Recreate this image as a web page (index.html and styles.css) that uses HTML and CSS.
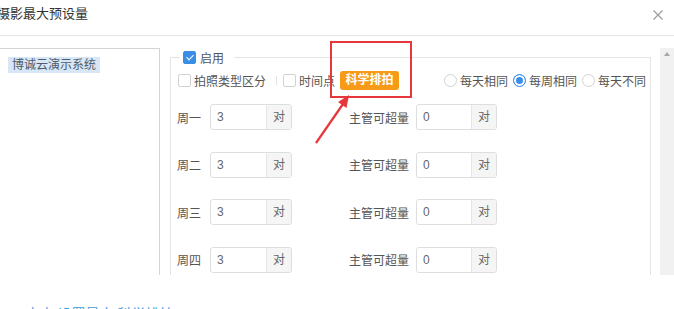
FILE: index.html
```html
<!DOCTYPE html>
<html lang="zh-CN">
<head>
  <meta charset="UTF-8">
  <title>摄影最大预设量</title>
  <link rel="stylesheet" href="styles.css">
</head>
<body>
  <div class="dialog">
    <!-- 标题栏 -->
    <div class="dialog-head">
      <span class="dialog-title">摄影最大预设量</span>
      <svg class="close" width="10" height="10" viewBox="0 0 10 10">
        <path d="M0.5 0.5 L9.5 9.5 M9.5 0.5 L0.5 9.5" stroke="#9a9a9a" stroke-width="1.1" fill="none"/>
      </svg>
    </div>

    <div class="dialog-body">
      <!-- 左侧机构 -->
      <div class="org-tree">
        <span class="org-item">博诚云演示系统</span>
      </div>

      <!-- 右侧设置 -->
      <fieldset class="setting">
        <legend><span class="legend-inner"><span class="check checked"></span>启用</span></legend>

        <div class="options">
          <label class="opt first"><span class="check"></span>拍照类型区分</label>
          <span class="split"></span>
          <label class="opt second"><span class="check"></span>时间点</label>
          <span class="btn-orange">科学排拍</span>
          <label class="radio first"><span class="dot"></span>每天相同</label>
          <label class="radio"><span class="dot checked"></span>每周相同</label>
          <label class="radio"><span class="dot"></span>每天不同</label>
        </div>

        <div class="day-rows">
          <div class="day-row">
            <span class="day-label">周一</span>
            <div class="num-input"><span class="num-val">3</span><span class="unit">对</span></div>
            <span class="over-label">主管可超量</span>
            <div class="num-input small"><span class="num-val">0</span><span class="unit">对</span></div>
          </div>
          <div class="day-row">
            <span class="day-label">周二</span>
            <div class="num-input"><span class="num-val">3</span><span class="unit">对</span></div>
            <span class="over-label">主管可超量</span>
            <div class="num-input small"><span class="num-val">0</span><span class="unit">对</span></div>
          </div>
          <div class="day-row">
            <span class="day-label">周三</span>
            <div class="num-input"><span class="num-val">3</span><span class="unit">对</span></div>
            <span class="over-label">主管可超量</span>
            <div class="num-input small"><span class="num-val">0</span><span class="unit">对</span></div>
          </div>
          <div class="day-row">
            <span class="day-label">周四</span>
            <div class="num-input"><span class="num-val">3</span><span class="unit">对</span></div>
            <span class="over-label">主管可超量</span>
            <div class="num-input small"><span class="num-val">0</span><span class="unit">对</span></div>
          </div>
          <div class="day-row">
            <span class="day-label">周五</span>
            <div class="num-input"><span class="num-val">3</span><span class="unit">对</span></div>
            <span class="over-label">主管可超量</span>
            <div class="num-input small"><span class="num-val">0</span><span class="unit">对</span></div>
          </div>
        </div>
      </fieldset>

      <!-- 滚动条 -->
      <div class="scrollbar"><span class="arrow-up"></span></div>
    </div>

    <p class="tip">4、 点击 设置最大 科学排拍</p>
  </div>

  <!-- 标注：红框和箭头 -->
  <div class="mark-box"></div>
  <svg class="mark-arrow" width="60" height="60" viewBox="0 0 60 60">
    <line x1="16" y1="53" x2="43" y2="14" stroke="#e8373a" stroke-width="2.2"/>
    <polygon points="49,5 46.5,18 38,12" fill="#e8373a"/>
  </svg>
</body>
</html>
```

FILE: styles.css
```css
/* 基本设置 */
body {
  margin: 0;
  background: #fff;
  font-family: "Liberation Sans", "Noto Sans CJK SC", sans-serif;
  color: #555;
  overflow: hidden;
}
.dialog {
  width: 674px;
}
/* 标题栏 */
.dialog-head {
  height: 35px;
  border-bottom: 1px solid #e6e6e6;
  display: flex;
  justify-content: space-between;
  align-items: flex-start;
}
.dialog-title {
  margin-left: -3px;
  padding-top: 6px;
  font-size: 13px;
  line-height: 16px;
  color: #333;
  white-space: nowrap;
}
.close {
  margin: 10px 11px 0 0;
}
/* 主体区域 */
.dialog-body {
  display: flex;
  margin-top: 12px;
  height: 227px;
  overflow: hidden;
}
.org-tree {
  flex: none;
  box-sizing: border-box;
  width: 170px;
  height: 260px;
  margin-left: -10px;
  border: 1px solid #d4d4d4;
}
.org-item {
  display: inline-block;
  margin: 8px 0 0 17px;
  padding: 0 4px;
  font-size: 12px;
  line-height: 16px;
  background: #d8e7f6;
  color: #4d5c6b;
}
/* 设置框 */
.setting {
  flex: none;
  box-sizing: border-box;
  width: 481px;
  height: 280px;
  margin: 2px 0 0 10px;
  padding: 0 6px;
  border: 1px solid #e4e4e4;
  min-width: 0;
}
.setting legend {
  margin-left: 3px;
  padding: 0 10px 0 3px;
}
.legend-inner {
  display: flex;
  align-items: center;
  height: 14px;
  font-size: 12px;
  gap: 4px;
  color: #555;
}
.check {
  flex: none;
  display: inline-block;
  box-sizing: border-box;
  width: 13px;
  height: 13px;
  border: 1px solid #d2d2d2;
  border-radius: 2px;
  background: #fff;
  position: relative;
}
.check.checked {
  background: #3a8ee6;
  border-color: #3a8ee6;
}
.check.checked::after {
  content: "";
  position: absolute;
  left: 3.5px;
  top: 1px;
  width: 3px;
  height: 6px;
  border: solid #fff;
  border-width: 0 1.6px 1.6px 0;
  transform: rotate(45deg);
}
/* 选项行 */
.options {
  display: flex;
  align-items: center;
  height: 20px;
  margin-top: 6px;
  font-size: 12px;
  white-space: nowrap;
}
.options > * {
  flex: none;
}
.opt {
  display: flex;
  align-items: center;
  gap: 3px;
}
.opt.first {
  margin-left: 1px;
}
.split {
  width: 1px;
  height: 9px;
  background: #e3e3e3;
  margin: 0 6px 0 10px;
}
.btn-orange {
  margin-left: 5px;
  padding: 0 5.5px;
  line-height: 19px;
  border-radius: 3px;
  background: #f79a18;
  color: #fff;
  font-weight: bold;
}
.radio {
  display: flex;
  align-items: center;
  gap: 3px;
  margin-left: 5px;
}
.radio.first {
  margin-left: 45px;
}
.dot {
  flex: none;
  display: inline-block;
  box-sizing: border-box;
  width: 13px;
  height: 13px;
  border: 1px solid #d2d2d2;
  border-radius: 50%;
}
.dot.checked {
  border-color: #3a8ee6;
  background: #3a8ee6;
  box-shadow: inset 0 0 0 2px #fff;
}
/* 每天设置 */
.day-rows {
  display: flex;
  flex-direction: column;
  gap: 21.5px;
  margin-top: 14px;
  font-size: 12px;
  white-space: nowrap;
}
.day-row {
  display: flex;
  align-items: center;
  height: 26px;
}
.day-row > * {
  flex: none;
}
.day-label {
  width: 33px;
}
.over-label {
  width: 67px;
  margin-left: 57px;
}
.num-input {
  display: flex;
  box-sizing: border-box;
  width: 82px;
  height: 26px;
  border: 1px solid #dedede;
  border-radius: 3px;
  overflow: hidden;
}
.num-input.small {
  width: 81px;
}
.num-val {
  flex: 1;
  padding-left: 6px;
  line-height: 24px;
  color: #666;
}
.unit {
  width: 24px;
  text-align: center;
  line-height: 24px;
  background: #f5f5f5;
  border-left: 1px solid #e6e6e6;
  color: #666;
}
/* 滚动条 */
.scrollbar {
  flex: none;
  width: 14px;
  margin-left: 9px;
  background: #f1f1f1;
  display: flex;
  justify-content: center;
}
.arrow-up {
  margin-top: 4px;
  width: 0;
  height: 0;
  border-left: 3px solid transparent;
  border-right: 3px solid transparent;
  border-bottom: 4px solid #a8a8a8;
}
/* 底部说明 */
.tip {
  margin: 29px 0 0;
  font-size: 14px;
  line-height: 20px;
  color: #3b9bd8;
  white-space: nowrap;
}
/* 标注 */
.mark-box {
  position: absolute;
  left: 330px;
  top: 41px;
  box-sizing: border-box;
  width: 82px;
  height: 57px;
  border: 2px solid #e8373a;
}
.mark-arrow {
  position: absolute;
  left: 300px;
  top: 90px;
}
```
